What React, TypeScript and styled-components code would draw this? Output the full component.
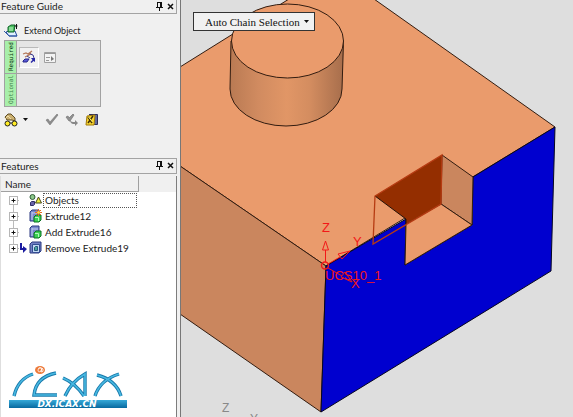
import React from "react";
import styled, { createGlobalStyle } from "styled-components";

const Global = createGlobalStyle`
  * { box-sizing: border-box; }
  body { margin: 0; background: #f0f0f0; color: #1c1c1c; font: 10px/16px Lato, sans-serif; overflow: hidden; }
  button, select { font: inherit; color: inherit; margin: 0; padding: 0; border: 0; background: none; }
  svg { display: block; }
`;

const Workspace = styled.main`
  display: grid;
  grid-template-columns: 177px minmax(0, 1fr);
  column-gap: 3px;
  height: 100vh;
`;

const Sidebar = styled.aside`
  display: flex;
  flex-direction: column;
  min-height: 0;
`;

const Panel = styled.section<{ $grow?: boolean }>`
  display: flex;
  flex-direction: column;
  flex: ${(p) => (p.$grow ? "1" : "0 0 158px")};
  min-height: 0;
`;

const PanelHeader = styled.header<{ $ruled?: boolean }>`
  display: flex;
  align-items: center;
  height: ${(p) => (p.$ruled ? 16 : 14)}px;
  padding: 0 0 1px 1px;
  border: solid #a3a3a3;
  border-width: ${(p) => (p.$ruled ? 1 : 0)}px 1px 1px 0;
`;

const Title = styled.h2`
  flex: 1;
  margin: 0;
  font-size: 10px;
  line-height: 12px;
  font-weight: 400;
`;

const HeaderButton = styled.button`
  width: 11px;
  height: 11px;
`;

const Guide = styled.div`
  display: flex;
  flex-direction: column;
  padding: 9px 4px 0;
`;

const Command = styled.div`
  display: flex;
  align-items: center;
  gap: 6px;
  height: 16px;
  font-size: 9px;
`;

const Steps = styled.div`
  display: grid;
  grid-template-rows: 33px 33px;
  width: 97px;
  margin-top: 1px;
  border: solid #a2a2a2;
  border-width: 1px 1px 0;
`;

const Step = styled.div`
  display: grid;
  grid-template-columns: 12px 1fr;
  border-bottom: 1px solid #a2a2a2;
  background: #e5e5e5;
`;

const StepLabel = styled.span<{ $dim?: boolean }>`
  writing-mode: vertical-rl;
  transform: rotate(180deg);
  background: #a8efaa;
  border-left: 1px solid #a2a2a2;
  color: ${(p) => (p.$dim ? "#3f7d4c" : "#06300c")};
  font: 6px/11px "DejaVu Sans Mono", monospace;
  text-align: center;
`;

const StepTools = styled.div`
  display: flex;
  align-items: center;
  gap: 1px;
  padding-left: 2px;
`;

const ToolButton = styled.button<{ $active?: boolean }>`
  display: grid;
  place-items: center;
  width: 20px;
  height: 21px;
  border: 1px solid;
  border-color: ${(p) => (p.$active ? "#b9b9b9 #fff #fff #b9b9b9" : "transparent")};
  background: ${(p) => (p.$active ? "#f1f1f1" : "transparent")};
`;

const Actions = styled.div`
  display: grid;
  grid-template-columns: 17px 24px 20px 20px 14px;
  align-items: center;
  height: 24px;
  padding-top: 1px;
`;

const ActionButton = styled.button`
  width: 14px;
  height: 14px;
`;

const CaretButton = styled.button`
  display: grid;
  place-items: center;
  width: 9px;
  height: 14px;
`;

const TreeArea = styled.div`
  display: flex;
  flex-direction: column;
  flex: 1;
  min-height: 0;
  margin-top: 2px;
  border-right: 1px solid #7d7d7d;
  border-left: 1px solid #dedede;
  background: #fff;
`;

const HeadRow = styled.div`
  display: flex;
  background: #f0f0f0;
`;

const ColumnHead = styled.div`
  width: 138px;
  height: 16px;
  padding-left: 4px;
  border: solid #a0a0a0;
  border-width: 0 1px 1px 0;
`;

const Tree = styled.ul`
  margin: 0;
  padding: 0;
  list-style: none;
`;

const Row = styled.li`
  display: grid;
  grid-template-columns: 11px 10px 14px 94px;
  align-items: center;
  height: 16px;
  padding-left: 7px;
  white-space: nowrap;
`;

const Expander = styled.button`
  width: 11px;
  height: 16px;
`;

const ItemName = styled.span<{ $focused?: boolean }>`
  height: 15px;
  padding-left: 1px;
  border: 1px dotted ${(p) => (p.$focused ? "#555" : "transparent")};
  line-height: 13px;
`;

const Brand = styled.div`
  margin: auto 0 8px 7px;
`;

const Viewport = styled.section`
  position: relative;
  min-width: 0;
  border-left: 1px solid #777;
  background: #dedede;
  overflow: hidden;
`;

const Model = styled.svg`
  width: 100%;
  height: 100%;
`;

const Picker = styled.label`
  position: absolute;
  top: 12px;
  left: 12px;
  display: flex;
  align-items: center;
  width: 122px;
  height: 19px;
  padding: 0 5px 0 11px;
  border: 1px solid #333;
  background: #f1f1f1;
`;

const PickerSelect = styled.select`
  flex: 1;
  min-width: 0;
  appearance: none;
  font: 11px/16px "Liberation Serif", serif;
  color: #111;
`;

const Pin = () => (
  <svg width="11" height="11" viewBox="0 0 11 11">
    <path d="M3.500 1.500h4M3.500 1v5M6.500 1v5M7.500 1v5M2 6.500h7M5.500 7v3" stroke="#111" fill="none" />
  </svg>
);

const Close = () => (
  <svg width="11" height="11" viewBox="0 0 11 11">
    <path d="M3 3l5 5M8 3l-5 5" stroke="#111" strokeWidth="1.500" />
  </svg>
);

const ExtendIcon = () => (
  <svg width="14" height="14" viewBox="0 0 14 14">
    <path d="M2 8l3-1h6l2 5H5z" fill="#dff0ff" stroke="#26479b" />
    <path d="M4 3l3-2h4l-1 7H4z" fill="#48c05c" stroke="#13652c" />
    <path d="M5 4h4M5 6h4" fill="none" stroke="#c9f7cf" />
    <path d="M12.500 0v5M10.500 2h3" stroke="#111" />
    <path d="M0 7l5 5h8" fill="none" stroke="#315ba6" />
  </svg>
);

const ArrowsIcon = () => (
  <svg width="14" height="14" viewBox="0 0 14 14">
    <path d="M1 4l3-1 2 1 4-3M3 7l4-2 2-2" fill="none" stroke="#b57a5c" strokeWidth="1.300" />
    <path d="M8 4q4 0 4 4M5 6l3 2" fill="none" stroke="#3d3d90" />
    <path d="M1 11l2-2h4l-2 3H1z" fill="#5a5ad8" stroke="#282889" />
    <path d="M9 8h4v4l-1.500-1-2 2-1-1 2-2z" fill="#2727a5" />
  </svg>
);

const WindowIcon = () => (
  <svg width="14" height="13" viewBox="0 0 14 13">
    <path d="M1.500 1.500h11v10h-11z" fill="#f3f3f3" stroke="#a0a0a0" />
    <path d="M2 2.500h10M3 6.500h4M3 9.500h3" stroke="#999" />
    <path d="M8 5v5l3-2z" fill="#777" />
  </svg>
);

const GlassesIcon = () => (
  <svg width="14" height="14" viewBox="0 0 14 14">
    <path d="M1 4l3-3h3l4 4v3L8 7H3z" fill="#cbb070" stroke="#5c4b23" />
    <path d="M1 6l3-3 3 3" stroke="#eedca8" fill="none" />
    <circle cx="3.500" cy="10.500" r="2.500" fill="#ffec24" stroke="#222" />
    <circle cx="10.500" cy="10.500" r="2.500" fill="#ffec24" stroke="#222" />
    <path d="M6 10h2" stroke="#222" />
  </svg>
);

const Caret = () => (
  <svg width="5" height="3" viewBox="0 0 5 3">
    <path d="M0 0h5L2.500 3z" fill="#111" />
  </svg>
);

const Check = () => (
  <svg width="14" height="13" viewBox="0 0 14 13">
    <path d="M1 7l2-1 2 3 7-8 1 1-8 10z" fill="#8c8c8c" stroke="#777" strokeWidth=".6" />
  </svg>
);

const CheckNext = () => (
  <svg width="14" height="13" viewBox="0 0 14 13">
    <path d="M1 4l2-1 1 2 4-4 1 1-4 6H4z" fill="#929292" stroke="#7c7c7c" strokeWidth=".8" />
    <path d="M5 7q1 2 3 2h2V7l3 3-3 3v-2H8Q5 10 5 7z" fill="#888" />
  </svg>
);

const CancelIcon = () => (
  <svg width="14" height="14" viewBox="0 0 14 14">
    <path d="M4 1.500h8.500v10H9" fill="#626b9e" stroke="#2d2d5c" />
    <path d="M2 3l8-1-1 10H1z" fill="#f7d52f" stroke="#a07808" />
    <path d="M3 4l4 6M8 3L3 10" stroke="#3d2b05" strokeWidth="1.500" />
    <path d="M3.500 4l4 5" stroke="#fff36a" />
  </svg>
);

const ObjectsIcon = () => (
  <svg width="13" height="14" viewBox="0 0 13 14">
    <circle cx="3.500" cy="4" r="2.500" fill="#8cc88a" stroke="#2f5b36" />
    <path d="M9.500 4l3 6h-6z" fill="#eef03e" stroke="#44441a" />
    <path d="M1.500 9.500l1-1h3v3l-1 1h-3z" fill="#6b65a8" stroke="#302e66" />
  </svg>
);

const ExtrudeIcon = ({ spark }: { spark?: boolean }) => (
  <svg width="13" height="14" viewBox="0 0 13 14">
    <path d="M1 3l2-2h7v9l-2 2H1z" fill="#7888cc" stroke="#2d3a80" />
    <path d="M3 3v8M3 4h6" stroke="#c2caef" />
    <path d="M5 8l2-2h5v5l-2 2H5z" fill="#3bd151" stroke="#0b7124" />
    <path d="M6 8.500h3.500V12" fill="none" stroke="#b5f5bd" />
    {spark && (
      <>
        <path d="M9.500 0v7M6 3.500h7M7 1l5 5M12 1L7 6" stroke="#e66b21" />
        <circle cx="9.500" cy="3.500" r="1.300" fill="#ffe14c" />
      </>
    )}
  </svg>
);

const RemoveIcon = () => (
  <svg width="13" height="14" viewBox="0 0 13 14">
    <path d="M1 3l2-2h9v9l-2 2H1z" fill="#7180c4" stroke="#2b397f" />
    <path d="M3.500 3.500h7v8h-7z" fill="#bfd8f2" stroke="#344c93" />
    <path d="M5.500 9.500v-3l1-1h2v4z" fill="#49a5a0" stroke="#28537c" />
  </svg>
);

const CurrentArrow = () => (
  <svg width="8" height="10" viewBox="-1 0 8 10">
    <path d="M1 0v6h3" fill="none" stroke="#1b1ba0" strokeWidth="2" />
    <path d="M3 3l4 3-4 4z" fill="#1b1ba0" />
  </svg>
);

const PlusBox = ({ first, last }: { first?: boolean; last?: boolean }) => (
  <svg width="11" height="16" viewBox="0 0 11 16">
    <path d={`M5.500 ${first ? 4 : 0}V${last ? 12 : 16}M9 8.500h2`} stroke="#bbb" />
    <rect x="1.500" y="4.500" width="8" height="8" fill="#fff" stroke="#b6b6b6" />
    <path d="M3.500 8.500h4M5.500 6.500v4" stroke="#111" />
  </svg>
);

const letterStrokes = [
  "M14 31Q18 14 33 9",
  "M56 8Q36 12 34 30H57",
  "M63 13Q75 18 84 31M65 31Q71 17 85 9V31",
  "M97 10Q116 15 121 31M95 31Q100 15 119 9",
];

const Logo = () => (
  <svg width="120" height="44" viewBox="8 0 120 44" role="img" aria-label="iCAX">
    <defs>
      <linearGradient id="bar" x2="0" y2="1">
        <stop offset="0" stopColor="#36a9d8" />
        <stop offset="1" stopColor="#07699f" />
      </linearGradient>
    </defs>
    {letterStrokes.map((d) => (
      <g key={d} fill="none">
        <path d={d} stroke="#1878aa" strokeWidth="3.400" />
        <path d={d} stroke="#48b9e2" strokeWidth="1.600" />
      </g>
    ))}
    <ellipse cx="40" cy="5" rx="5" ry="4" fill="#ed7938" />
    <path d="M41 3q-3-1-3 2t3 1l1-3-1 4q3 0 2-3-2-2-4-1" fill="none" stroke="#fff" strokeWidth=".8" />
    <rect x="9" y="35" width="118" height="8" fill="url(#bar)" />
    <text x="67" y="42" textAnchor="middle" fill="#fff" fontFamily="DejaVu Sans" fontWeight="700" fontStyle="italic" fontSize="9">
      DX.ICAX.CN
    </text>
  </svg>
);

const Solid = () => (
  <Model viewBox="181 0 392 417" preserveAspectRatio="xMidYMid slice" aria-label="Solid model">
    <defs>
      <linearGradient id="cylinder">
        <stop offset="0" stopColor="#b97a53" />
        <stop offset=".25" stopColor="#d18b60" />
        <stop offset=".5" stopColor="#e19666" />
        <stop offset=".7" stopColor="#d48d60" />
        <stop offset="1" stopColor="#a76e4c" />
      </linearGradient>
    </defs>
    <g stroke="#321c10" strokeWidth="1">
      <path d="M180 67L289-1h85l181 128-229 139L180 166z" fill="#ea9b6c" />
      <path d="M180 166l146 100-5 146-141-98z" fill="#ca865e" />
      <path d="M326 266l80-47-1 46 67-40 1-48 82-50-4 144-230 141z" fill="#0000cf" stroke="#07071f" />
      <path d="M231 41L230 89a56 37 0 00112 0l1.500-48z" fill="url(#cylinder)" />
      <ellipse cx="287.500" cy="41" rx="56" ry="37" fill="#ea9b6c" />
      <path d="M442 155l31 22-1 48-31-21z" fill="#ca865e" />
      <path d="M406 224l35-20 31 21-67 40z" fill="#ea9b6c" />
    </g>
    <path d="M375 196l67-41-1 49-35 20v-5z" fill="#942e00" />
    <path d="M375 196l31 23v6" fill="none" stroke="#241108" />
    <path d="M375 196l67-41-1 49-68 40z" fill="none" stroke="#b63b12" strokeWidth="1.300" />
    <g fill="none" stroke="#f21818">
      <path d="M325.500 262v-12M322.500 250h6l-3-9zM328 264l12-7M338 254l4 5 8-8zM328 268l14 8M341 277l4-5 7 10z" />
      <circle cx="325" cy="265.500" r="3.500" strokeWidth="1.400" />
    </g>
    <g fontFamily="Liberation Sans" fontSize="13" fill="#f21818">
      <text x="322" y="232">Z</text>
      <text x="353" y="246">Y</text>
      <text x="351" y="288">X</text>
      <text x="325" y="280">UCS10_1</text>
    </g>
    <g fontFamily="Liberation Sans" fontSize="12" fill="#888">
      <text x="222" y="412">Z</text>
      <text x="250" y="423">Y</text>
    </g>
  </Model>
);

const features = [
  { name: "Objects", icon: <ObjectsIcon /> },
  { name: "Extrude12", icon: <ExtrudeIcon spark /> },
  { name: "Add Extrude16", icon: <ExtrudeIcon /> },
  { name: "Remove Extrude19", icon: <RemoveIcon />, current: true },
];

const PanelTitle = ({ text, ruled }: { text: string; ruled?: boolean }) => (
  <PanelHeader $ruled={ruled}>
    <Title>{text}</Title>
    <HeaderButton aria-label={`Pin ${text}`}><Pin /></HeaderButton>
    <HeaderButton aria-label={`Close ${text}`}><Close /></HeaderButton>
  </PanelHeader>
);

export default function App() {
  return (
    <>
      <Global />
      <Workspace>
        <Sidebar>
          <Panel>
            <PanelTitle text="Feature Guide" />
            <Guide>
              <Command><ExtendIcon />Extend Object</Command>
              <Steps>
                <Step>
                  <StepLabel>Required</StepLabel>
                  <StepTools>
                    <ToolButton $active aria-label="Pick objects"><ArrowsIcon /></ToolButton>
                    <ToolButton aria-label="Options"><WindowIcon /></ToolButton>
                  </StepTools>
                </Step>
                <Step><StepLabel $dim>Optional</StepLabel></Step>
              </Steps>
              <Actions>
                <ActionButton aria-label="Preview"><GlassesIcon /></ActionButton>
                <CaretButton aria-label="Preview options"><Caret /></CaretButton>
                <ActionButton aria-label="OK"><Check /></ActionButton>
                <ActionButton aria-label="Apply"><CheckNext /></ActionButton>
                <ActionButton aria-label="Cancel"><CancelIcon /></ActionButton>
              </Actions>
            </Guide>
          </Panel>
          <Panel $grow>
            <PanelTitle text="Features" ruled />
            <TreeArea>
              <HeadRow><ColumnHead>Name</ColumnHead></HeadRow>
              <Tree>
                {features.map((f, i) => (
                  <Row key={f.name}>
                    <Expander aria-label={`Expand ${f.name}`}>
                      <PlusBox first={i === 0} last={i === features.length - 1} />
                    </Expander>
                    <span>{f.current && <CurrentArrow />}</span>
                    {f.icon}
                    <ItemName $focused={i === 0}>{f.name}</ItemName>
                  </Row>
                ))}
              </Tree>
              <Brand><Logo /></Brand>
            </TreeArea>
          </Panel>
        </Sidebar>
        <Viewport>
          <Solid />
          <Picker>
            <PickerSelect aria-label="Selection mode">
              <option>Auto Chain Selection</option>
            </PickerSelect>
            <Caret />
          </Picker>
        </Viewport>
      </Workspace>
    </>
  );
}
